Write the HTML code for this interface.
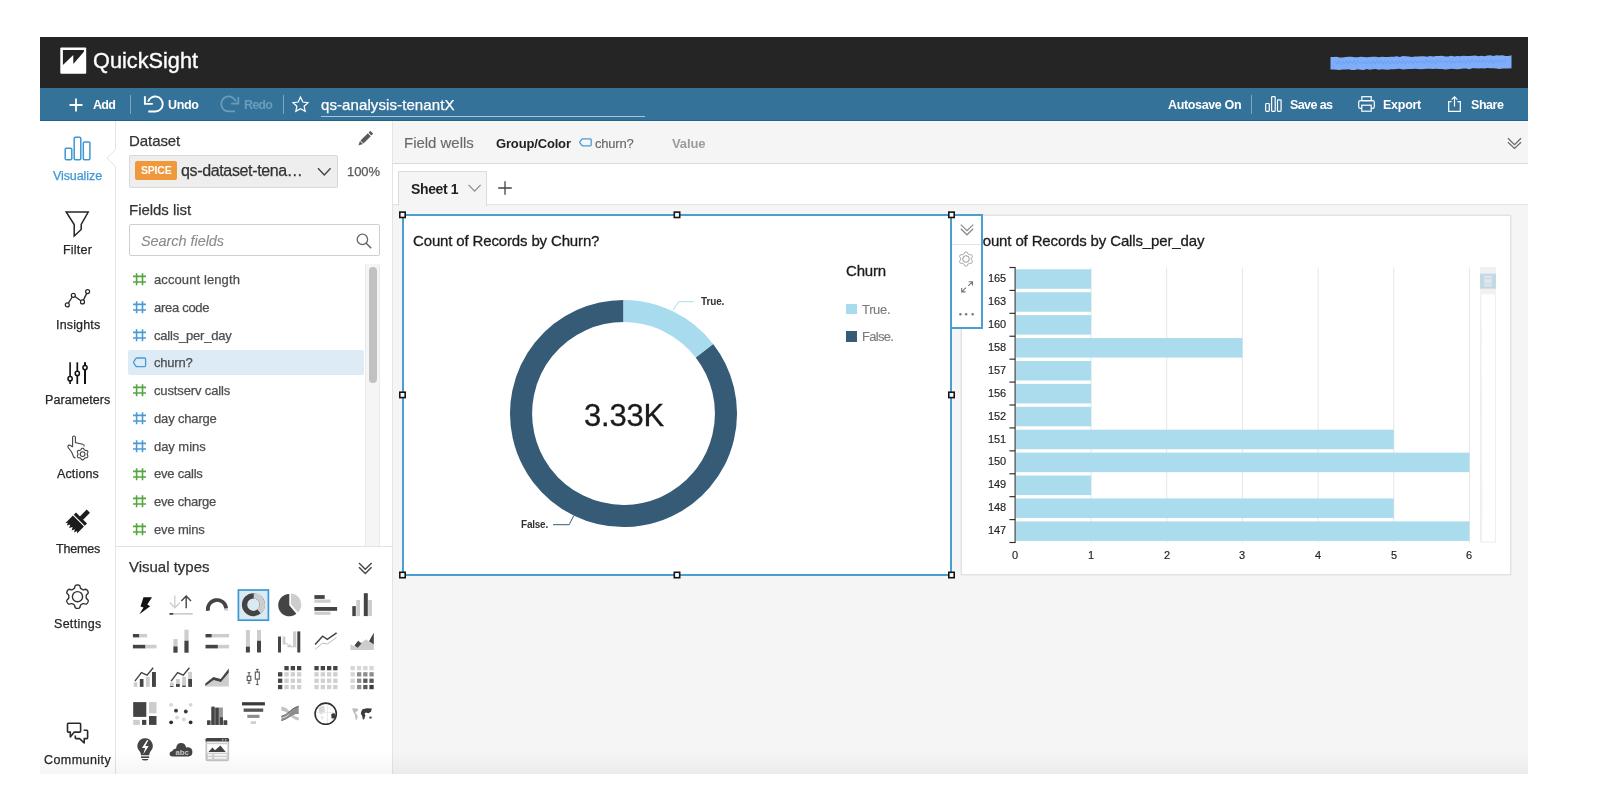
<!DOCTYPE html>
<html lang="en">
<head>
<meta charset="utf-8">
<title>QuickSight</title>
<style>
*{box-sizing:border-box;margin:0;padding:0}
html,body{width:1600px;height:796px;background:#fff;overflow:hidden}
body{font-family:"Liberation Sans",sans-serif;color:#333;position:relative}
.a{position:absolute;display:block}
.t{position:absolute;white-space:pre;line-height:1;will-change:transform}
svg{overflow:visible}
</style>
</head>
<body>
<div class="a" style="left:40px;top:37px;width:1488px;height:737px;background:#f5f5f5;"></div>
<div class="a" style="left:40px;top:37px;width:1488px;height:51px;background:#252525;"></div>
<div class="a" style="left:40px;top:88px;width:1488px;height:33.4px;background:#34729a;border-bottom:1.5px solid #1d6591;"></div>
<div class="a" style="left:40px;top:121px;width:76px;height:653px;background:#fff;"></div>
<div class="a" style="left:116px;top:121px;width:276px;height:653px;background:#fff;"></div>
<div class="a" style="left:392px;top:121px;width:1px;height:653px;background:#e4e4e4;"></div>
<div class="a" style="left:393px;top:121px;width:1135px;height:43px;background:#f5f5f5;border-bottom:1px solid #d9d9d9;"></div>
<div class="a" style="left:393px;top:164px;width:1135px;height:41px;background:#fff;border-bottom:1px solid #e3e3e3;"></div>
<svg class="a" style="left:100px;top:121px;" width="20" height="653" viewBox="0 0 20 653"><polyline points="15.5,0 15.5,28.5 7,37 15.5,45.5 15.5,653" fill="none" stroke="#e3e3e3" stroke-width="1"/></svg>
<svg class="a" style="left:60px;top:47px;" width="27" height="27" viewBox="0 0 27 27"><rect x="0.3" y="0.4" width="25.9" height="26.3" rx="1" fill="#fff"/><polygon points="2.9,3 23.9,3 23.9,4.8 13.3,16.9 13.3,8.1 2.9,18.1" fill="#222"/></svg>
<div class="t" style="left:93.40px;top:50.00px;font-size:21.7px;color:#fff;letter-spacing:0.013px;-webkit-text-stroke:0.35px #fff;">QuickSight</div>
<svg class="a" style="left:1326px;top:50px" width="190" height="26" viewBox="1326 50 190 26"><polygon points="1330.5,56.9 1333.5,57.1 1336.5,56.7 1339.5,57.5 1342.6,57.4 1345.6,57.1 1348.6,56.7 1351.6,56.7 1354.6,57.3 1357.7,57.3 1360.7,56.7 1363.7,57.1 1366.7,57.3 1369.7,57.0 1372.7,56.8 1375.8,56.8 1378.8,57.2 1381.8,56.8 1384.8,57.1 1387.8,57.1 1390.8,56.7 1393.8,56.7 1396.9,56.3 1399.9,56.9 1402.9,56.1 1405.9,56.3 1408.9,56.5 1412.0,57.0 1415.0,56.4 1418.0,56.6 1421.0,56.3 1424.0,56.2 1427.0,56.8 1430.0,55.9 1433.1,56.6 1436.1,56.0 1439.1,55.9 1442.1,55.8 1445.1,56.6 1448.2,56.4 1451.2,55.7 1454.2,56.6 1457.2,56.0 1460.2,56.2 1463.2,55.8 1466.2,55.9 1469.3,55.9 1472.3,55.8 1475.3,55.5 1478.3,56.2 1481.3,55.7 1484.3,56.3 1487.4,55.5 1490.4,55.3 1493.4,55.9 1496.4,55.3 1499.4,55.5 1502.5,55.3 1505.5,55.9 1508.5,56.1 1511.5,55.3 1511.5,68.3 1508.5,68.4 1505.5,68.4 1502.5,68.5 1499.4,69.0 1496.4,68.5 1493.4,68.2 1490.4,68.2 1487.4,68.1 1484.3,68.5 1481.3,68.2 1478.3,68.5 1475.3,68.3 1472.3,68.2 1469.3,69.2 1466.2,68.4 1463.2,68.5 1460.2,69.1 1457.2,69.3 1454.2,69.1 1451.2,68.7 1448.2,69.3 1445.1,69.4 1442.1,69.1 1439.1,68.9 1436.1,68.8 1433.1,69.1 1430.0,68.8 1427.0,68.7 1424.0,69.1 1421.0,69.3 1418.0,68.9 1415.0,68.8 1412.0,68.9 1408.9,69.0 1405.9,69.3 1402.9,69.4 1399.9,68.8 1396.9,69.1 1393.8,69.2 1390.8,69.2 1387.8,69.7 1384.8,69.5 1381.8,69.2 1378.8,69.8 1375.8,69.0 1372.7,69.2 1369.7,69.7 1366.7,69.1 1363.7,69.9 1360.7,69.7 1357.7,69.3 1354.6,69.9 1351.6,70.1 1348.6,69.3 1345.6,69.5 1342.6,69.4 1339.5,70.0 1336.5,69.7 1333.5,69.4 1330.5,69.4" fill="#80adf9"/><polyline points="1335.0,60.4 1336.9,64.1 1338.8,60.7 1340.7,64.6 1342.6,61.3 1344.5,64.1 1346.4,60.3 1348.3,63.8 1350.2,60.6 1352.1,63.7 1354.0,60.5 1355.9,64.5 1357.8,60.4 1359.7,63.5 1361.6,61.3 1363.5,64.0 1365.4,61.3 1367.3,63.8 1369.2,61.2 1371.1,64.1 1373.0,61.0 1374.9,64.2 1376.8,60.7 1378.7,63.4 1380.6,60.3 1382.5,64.3 1384.4,61.1 1386.3,64.3 1388.2,60.4 1390.1,63.9 1392.0,60.9 1393.9,63.9 1395.8,60.9 1397.7,63.7 1399.6,60.7 1401.5,63.9 1403.4,60.2 1405.3,64.1 1407.2,61.0 1409.1,63.1 1411.0,60.9 1412.9,64.1 1414.8,60.5 1416.7,63.0 1418.6,60.8 1420.5,63.1 1422.4,60.8 1424.3,63.7 1426.2,59.7 1428.1,63.0 1430.0,60.4 1431.9,63.5 1433.8,60.5 1435.7,63.9 1437.6,59.8 1439.5,62.7 1441.4,60.6 1443.3,62.7 1445.2,60.5 1447.1,62.8 1449.0,60.4 1450.9,63.6 1452.8,60.5 1454.7,63.3 1456.6,60.5 1458.5,62.8 1460.4,60.2 1462.3,63.0 1464.2,60.4 1466.1,63.5 1468.0,59.9 1469.9,63.1 1471.8,59.3 1473.7,62.5 1475.6,60.0 1477.5,63.0 1479.4,60.3 1481.3,63.1 1483.2,59.4 1485.1,62.8 1487.0,60.1 1488.9,63.0 1490.8,59.1 1492.7,63.3 1494.6,60.1 1496.5,62.4 1498.4,59.7 1500.3,62.7 1502.2,60.0 1504.1,62.6 1506.0,59.3" fill="none" stroke="#5d96f1" stroke-width="1" opacity=".55"/></svg>
<svg class="a" style="left:69px;top:97.5px;" width="14" height="14" viewBox="0 0 14 14"><path d="M7,0.5V13.5M0.5,7H13.5" stroke="#fff" stroke-width="1.8" fill="none"/></svg>
<div class="t" style="left:92.50px;top:99.00px;font-size:12.5px;color:#fff;font-weight:700;letter-spacing:-0.704px;">Add</div>
<div class="a" style="left:130px;top:95px;width:1px;height:19px;background:#7fa6c0;"></div>
<svg class="a" style="left:144px;top:94px;" width="21" height="20" viewBox="0 0 21 20"><path d="M4.1,7.6 A7.5,7.5 0 1 1 11.6,17.5 H4.3" fill="none" stroke="#fff" stroke-width="1.9"/><path d="M0.9,2.2V9.9H8.8" fill="none" stroke="#fff" stroke-width="1.9"/></svg>
<div class="t" style="left:168.40px;top:99.00px;font-size:12.5px;color:#fff;font-weight:700;letter-spacing:-0.334px;">Undo</div>
<svg class="a" style="left:219px;top:94px;" width="21" height="20" viewBox="0 0 21 20"><path d="M16.8,7.5 A7.5,7.5 0 1 0 9.3,17.4 H16.1" fill="none" stroke="#6a9dbc" stroke-width="1.8"/><path d="M19.3,2.9V9.7H12.2" fill="none" stroke="#6a9dbc" stroke-width="1.8"/></svg>
<div class="t" style="left:244.00px;top:99.00px;font-size:12.5px;color:#6a9dbc;font-weight:700;letter-spacing:-0.812px;">Redo</div>
<div class="a" style="left:283px;top:95px;width:1px;height:19px;background:#7fa6c0;"></div>
<svg class="a" style="left:292px;top:96px;" width="17" height="16" viewBox="0 0 17 16"><polygon points="8.5,1 10.8,6 16,6.6 12.1,10.2 13.2,15.4 8.5,12.8 3.8,15.4 4.9,10.2 1,6.6 6.2,6" fill="none" stroke="#fff" stroke-width="1.2" stroke-linejoin="miter"/></svg>
<div class="t" style="left:320.75px;top:97.00px;font-size:15px;color:#fff;letter-spacing:0.093px;-webkit-text-stroke:0.25px #fff;">qs-analysis-tenantX</div>
<div class="a" style="left:320.5px;top:116px;width:324px;height:1px;background:#a9c5d8;"></div>
<div class="t" style="left:1167.80px;top:99.00px;font-size:12.5px;color:#fff;font-weight:700;letter-spacing:-0.355px;">Autosave On</div>
<div class="a" style="left:1251px;top:95px;width:1px;height:19px;background:#7fa6c0;"></div>
<svg class="a" style="left:1265px;top:96px;" width="17" height="16" viewBox="0 0 17 16"><rect x="0.7" y="7.5" width="3.6" height="7.8" rx="0.8" fill="none" stroke="#fff" stroke-width="1.2"/><rect x="6.6" y="0.7" width="3.6" height="14.6" rx="0.8" fill="none" stroke="#fff" stroke-width="1.2"/><rect x="12.5" y="3.8" width="3.6" height="11.5" rx="0.8" fill="none" stroke="#fff" stroke-width="1.2"/></svg>
<div class="t" style="left:1290.00px;top:99.00px;font-size:12.5px;color:#fff;font-weight:700;letter-spacing:-0.597px;">Save as</div>
<svg class="a" style="left:1358px;top:95.5px;" width="17" height="16" viewBox="0 0 17 16"><rect x="3.8" y="0.7" width="9.4" height="4" fill="none" stroke="#fff" stroke-width="1.2"/><rect x="0.7" y="4.7" width="15.6" height="7.6" rx="1.6" fill="none" stroke="#fff" stroke-width="1.2"/><rect x="3.8" y="9.2" width="9.4" height="6" fill="#34729a" stroke="#fff" stroke-width="1.2"/></svg>
<div class="t" style="left:1382.80px;top:99.00px;font-size:12.5px;color:#fff;font-weight:700;letter-spacing:-0.266px;">Export</div>
<svg class="a" style="left:1448px;top:95.5px;" width="13" height="16" viewBox="0 0 13 16"><path d="M3.6,5.6H0.7V15.3H12.3V5.6H9.4" fill="none" stroke="#fff" stroke-width="1.2"/><path d="M6.5,10.5V1M3.6,3.6L6.5,0.9L9.4,3.6" fill="none" stroke="#fff" stroke-width="1.2"/></svg>
<div class="t" style="left:1470.70px;top:99.00px;font-size:12.5px;color:#fff;font-weight:700;letter-spacing:-0.450px;">Share</div>
<svg class="a" style="left:64px;top:136px;" width="27" height="25" viewBox="0 0 27 25"><rect x="1.2" y="12.3" width="6.6" height="11.5" rx="1.2" fill="none" stroke="#3d97d3" stroke-width="1.5"/><rect x="10.2" y="1.3" width="6.6" height="22.5" rx="1.2" fill="none" stroke="#3d97d3" stroke-width="1.5"/><rect x="19.3" y="5.9" width="6.6" height="17.9" rx="1.2" fill="none" stroke="#3d97d3" stroke-width="1.5"/></svg>
<div class="t" style="left:53.00px;top:170.00px;font-size:12.5px;color:#3d97d3;letter-spacing:-0.090px;-webkit-text-stroke:0.25px #3d97d3;">Visualize</div>
<svg class="a" style="left:64px;top:210px;" width="27" height="28" viewBox="0 0 27 28"><path d="M2.2,2 H24.2 L17.2,14.5 V19.5 L10.2,26 V14.5 Z" fill="none" stroke="#262626" stroke-width="1.5" stroke-linejoin="miter"/></svg>
<div class="t" style="left:63.00px;top:244.00px;font-size:12.5px;color:#262626;letter-spacing:0.203px;-webkit-text-stroke:0.25px #262626;">Filter</div>
<svg class="a" style="left:60px;top:285px;" width="32" height="26" viewBox="0 0 32 26"><line x1="8.36" y1="18.20" x2="12.24" y2="12.00" stroke="#262626" stroke-width="1.3"/><line x1="14.93" y1="11.47" x2="20.87" y2="15.73" stroke="#262626" stroke-width="1.3"/><line x1="23.39" y1="15.11" x2="26.71" y2="8.39" stroke="#262626" stroke-width="1.3"/><circle cx="7.30" cy="19.90" r="2" fill="none" stroke="#262626" stroke-width="1.2"/><circle cx="13.30" cy="10.30" r="2" fill="none" stroke="#262626" stroke-width="1.2"/><circle cx="22.50" cy="16.90" r="2" fill="none" stroke="#262626" stroke-width="1.2"/><circle cx="27.60" cy="6.60" r="2" fill="none" stroke="#262626" stroke-width="1.2"/></svg>
<div class="t" style="left:55.50px;top:319.00px;font-size:12.5px;color:#262626;letter-spacing:0.163px;-webkit-text-stroke:0.25px #262626;">Insights</div>
<svg class="a" style="left:60px;top:360px;" width="32" height="26" viewBox="0 0 32 26"><line x1="10.10" y1="2.3" x2="10.10" y2="24" stroke="#111" stroke-width="1.6"/><circle cx="10.10" cy="18.70" r="2.1" fill="#fff" stroke="#111" stroke-width="1.5"/><line x1="17.30" y1="2.3" x2="17.30" y2="24" stroke="#111" stroke-width="1.7"/><circle cx="17.30" cy="13.40" r="2.1" fill="#fff" stroke="#111" stroke-width="1.5"/><line x1="25.00" y1="2.3" x2="25.00" y2="24" stroke="#111" stroke-width="2.0"/><circle cx="25.00" cy="7.60" r="2.1" fill="#fff" stroke="#111" stroke-width="1.5"/></svg>
<div class="t" style="left:45.00px;top:394.00px;font-size:12.5px;color:#262626;letter-spacing:0.079px;-webkit-text-stroke:0.25px #262626;">Parameters</div>
<svg class="a" style="left:58px;top:428px;" width="36" height="36" viewBox="0 0 36 36"><path d="M14.6,19 V9.3 Q14.6,8 16,8 Q17.4,8 17.4,9.3 V14.5 L24.5,16.3 Q26.3,16.8 26.3,18.5" fill="none" stroke="#444" stroke-width="1.1"/><path d="M14.6,19 L12.2,17.3 Q10.6,16.6 9.9,18 Q9.6,19 10.6,20.2 L13.6,24 L15.5,28.5 Q16,30 17.6,30" fill="none" stroke="#444" stroke-width="1.1"/><path d="M24.60,20.30 L24.90,20.32 L25.20,20.39 L25.48,20.53 L25.73,20.76 L25.95,21.08 L26.13,21.40 L26.31,21.65 L26.50,21.84 L26.69,21.99 L26.90,22.12 L27.11,22.23 L27.34,22.33 L27.60,22.40 L27.91,22.43 L28.28,22.42 L28.65,22.45 L28.98,22.55 L29.24,22.73 L29.45,22.95 L29.62,23.20 L29.76,23.47 L29.84,23.77 L29.86,24.08 L29.79,24.41 L29.62,24.75 L29.44,25.07 L29.30,25.35 L29.24,25.61 L29.21,25.86 L29.20,26.10 L29.21,26.34 L29.24,26.59 L29.30,26.85 L29.44,27.13 L29.62,27.45 L29.79,27.79 L29.86,28.12 L29.84,28.43 L29.76,28.73 L29.62,29.00 L29.45,29.25 L29.24,29.47 L28.98,29.65 L28.65,29.75 L28.28,29.78 L27.91,29.77 L27.60,29.80 L27.34,29.87 L27.11,29.97 L26.90,30.08 L26.69,30.21 L26.50,30.36 L26.31,30.55 L26.13,30.80 L25.95,31.12 L25.73,31.44 L25.48,31.67 L25.20,31.81 L24.90,31.88 L24.60,31.90 L24.30,31.88 L24.00,31.81 L23.72,31.67 L23.47,31.44 L23.25,31.12 L23.07,30.80 L22.89,30.55 L22.70,30.36 L22.51,30.21 L22.30,30.08 L22.09,29.97 L21.86,29.87 L21.60,29.80 L21.29,29.77 L20.92,29.78 L20.55,29.75 L20.22,29.65 L19.96,29.47 L19.75,29.25 L19.58,29.00 L19.44,28.73 L19.36,28.43 L19.34,28.12 L19.41,27.79 L19.58,27.45 L19.76,27.13 L19.90,26.85 L19.96,26.59 L19.99,26.34 L20.00,26.10 L19.99,25.86 L19.96,25.61 L19.90,25.35 L19.76,25.07 L19.58,24.75 L19.41,24.41 L19.34,24.08 L19.36,23.77 L19.44,23.47 L19.58,23.20 L19.75,22.95 L19.96,22.73 L20.22,22.55 L20.55,22.45 L20.92,22.42 L21.29,22.43 L21.60,22.40 L21.86,22.33 L22.09,22.23 L22.30,22.12 L22.51,21.99 L22.70,21.84 L22.89,21.65 L23.07,21.40 L23.25,21.08 L23.47,20.76 L23.72,20.53 L24.00,20.39 L24.30,20.32Z" fill="none" stroke="#444" stroke-width="1.1"/><circle cx="24.6" cy="26.1" r="2.4" fill="none" stroke="#444" stroke-width="1.1"/></svg>
<div class="t" style="left:56.70px;top:468.00px;font-size:12.5px;color:#262626;letter-spacing:0.143px;-webkit-text-stroke:0.25px #262626;">Actions</div>
<svg class="a" style="left:0px;top:0px;" width="1" height="1" viewBox="0 0 1 1"><g transform="translate(80.4,519.1) rotate(45)" fill="#1c1c1c"><rect x="-2.3" y="-11.2" width="4.6" height="10"/><rect x="-7.8" y="-1.6" width="15.6" height="3.2"/><polygon points="-7.8,2.8 7.8,2.8 7.8,12.5 6.2,10.8 5,14 3.2,11 1.8,14.2 0,11 -1.6,14.2 -3.4,11 -5,14 -6.4,11.4 -7.8,13.6"/></g></svg>
<div class="t" style="left:55.70px;top:543.00px;font-size:12.5px;color:#262626;letter-spacing:-0.159px;-webkit-text-stroke:0.25px #262626;">Themes</div>
<svg class="a" style="left:58px;top:577px;" width="40" height="40" viewBox="0 0 40 40"><path d="M19.50,8.00 L20.11,8.02 L20.72,8.11 L21.30,8.32 L21.81,8.83 L22.14,9.85 L22.37,10.86 L22.68,11.41 L23.06,11.71 L23.45,11.94 L23.85,12.17 L24.24,12.40 L24.64,12.62 L25.09,12.80 L25.72,12.80 L26.71,12.49 L27.76,12.27 L28.45,12.45 L28.93,12.85 L29.31,13.33 L29.63,13.85 L29.92,14.39 L30.14,14.96 L30.26,15.57 L30.07,16.27 L29.35,17.06 L28.59,17.77 L28.27,18.31 L28.20,18.79 L28.20,19.24 L28.20,19.70 L28.20,20.16 L28.20,20.61 L28.27,21.09 L28.59,21.63 L29.35,22.34 L30.07,23.13 L30.26,23.83 L30.14,24.44 L29.92,25.01 L29.63,25.55 L29.31,26.07 L28.93,26.55 L28.45,26.95 L27.76,27.13 L26.71,26.91 L25.72,26.60 L25.09,26.60 L24.64,26.78 L24.24,27.00 L23.85,27.23 L23.45,27.46 L23.06,27.69 L22.68,27.99 L22.37,28.54 L22.14,29.55 L21.81,30.57 L21.30,31.08 L20.72,31.29 L20.11,31.38 L19.50,31.40 L18.89,31.38 L18.28,31.29 L17.70,31.08 L17.19,30.57 L16.86,29.55 L16.63,28.54 L16.32,27.99 L15.94,27.69 L15.55,27.46 L15.15,27.23 L14.76,27.00 L14.36,26.78 L13.91,26.60 L13.28,26.60 L12.29,26.91 L11.24,27.13 L10.55,26.95 L10.07,26.55 L9.69,26.07 L9.37,25.55 L9.08,25.01 L8.86,24.44 L8.74,23.83 L8.93,23.13 L9.65,22.34 L10.41,21.63 L10.73,21.09 L10.80,20.61 L10.80,20.16 L10.80,19.70 L10.80,19.24 L10.80,18.79 L10.73,18.31 L10.41,17.77 L9.65,17.06 L8.93,16.27 L8.74,15.57 L8.86,14.96 L9.08,14.39 L9.37,13.85 L9.69,13.33 L10.07,12.85 L10.55,12.45 L11.24,12.27 L12.29,12.49 L13.28,12.80 L13.91,12.80 L14.36,12.62 L14.76,12.40 L15.15,12.17 L15.55,11.94 L15.94,11.71 L16.32,11.41 L16.63,10.86 L16.86,9.85 L17.19,8.83 L17.70,8.32 L18.28,8.11 L18.89,8.02Z" fill="none" stroke="#333" stroke-width="1.4" stroke-linejoin="round"/><circle cx="19.5" cy="19.7" r="5.1" fill="none" stroke="#333" stroke-width="1.4"/></svg>
<div class="t" style="left:53.70px;top:618.00px;font-size:12.5px;color:#262626;letter-spacing:0.291px;-webkit-text-stroke:0.25px #262626;">Settings</div>
<svg class="a" style="left:58px;top:713px;" width="40" height="40" viewBox="0 0 40 40"><path d="M10.3,10.3 H21.8 Q22.6,10.3 22.6,11.1 V18.3 Q22.6,19.1 21.8,19.1 H16.3 L12.3,24 V19.1 H10.3 Q9.5,19.1 9.5,18.3 V11.1 Q9.5,10.3 10.3,10.3 Z" fill="none" stroke="#2a2a2a" stroke-width="1.6" stroke-linejoin="round"/><path d="M25.6,17.3 H28.8 Q29.6,17.3 29.6,18.1 V24.8 Q29.6,25.6 28.8,25.6 H26.2 V30 L21.6,25.6 H18.1 Q17.3,25.6 17.3,24.8 V22.4" fill="none" stroke="#2a2a2a" stroke-width="1.6" stroke-linejoin="round"/></svg>
<div class="t" style="left:44.00px;top:754.00px;font-size:12.5px;color:#262626;letter-spacing:0.442px;-webkit-text-stroke:0.25px #262626;">Community</div>
<div class="t" style="left:129.20px;top:133.00px;font-size:15px;color:#333;letter-spacing:-0.072px;-webkit-text-stroke:0.25px #333;">Dataset</div>
<svg class="a" style="left:356.2px;top:129.6px;" width="18" height="18" viewBox="0 0 18 18"><g transform="translate(9,9) rotate(45)" fill="#5a5a5a"><rect x="-2.1" y="-9.6" width="4.2" height="2.6" rx="0.6"/><rect x="-2.1" y="-6.1" width="4.2" height="10.4"/><polygon points="-2.1,5.1 2.1,5.1 0,9.2"/></g></svg>
<div class="a" style="left:129px;top:154.5px;width:208.5px;height:33.5px;background:#eee;border:1px solid #d8d8d8;border-radius:2px;"></div>
<div class="a" style="left:135.4px;top:161px;width:41.3px;height:18.7px;background:#f0983c;border-radius:2px;"></div>
<div class="t" style="left:141.00px;top:165.00px;font-size:10.5px;color:#fff;font-weight:700;letter-spacing:-0.203px;">SPICE</div>
<div class="t" style="left:181.00px;top:163.00px;font-size:16px;color:#333;letter-spacing:-0.355px;-webkit-text-stroke:0.25px #333;">qs-dataset-tena…</div>
<svg class="a" style="left:317px;top:167px;" width="15" height="10" viewBox="0 0 15 10"><polyline points="1,1.2 7.3,8 13.6,1.2" fill="none" stroke="#444" stroke-width="1.4"/></svg>
<div class="t" style="left:347.40px;top:165.00px;font-size:13px;color:#585858;letter-spacing:-0.062px;-webkit-text-stroke:0.25px #585858;">100%</div>
<div class="t" style="left:129.20px;top:202.00px;font-size:15px;color:#333;letter-spacing:-0.029px;-webkit-text-stroke:0.25px #333;">Fields list</div>
<div class="a" style="left:129px;top:224.2px;width:251px;height:31.5px;background:#fff;border:1px solid #cfcfcf;border-radius:2px;"></div>
<div class="t" style="left:140.50px;top:234.00px;font-size:14.5px;color:#8a8a8a;font-style:italic;letter-spacing:-0.064px;-webkit-text-stroke:0.1px #8a8a8a;">Search fields</div>
<svg class="a" style="left:356px;top:233px;" width="17" height="17" viewBox="0 0 17 17"><circle cx="6.4" cy="6.4" r="5.2" fill="none" stroke="#666" stroke-width="1.3"/><line x1="10.2" y1="10.2" x2="15.2" y2="15.2" stroke="#666" stroke-width="1.5"/></svg>
<div class="a" style="left:128px;top:350.2px;width:236.3px;height:24.8px;background:#dcebf5;border-radius:2px;"></div>
<svg class="a" style="left:133px;top:273.4px;" width="13" height="13" viewBox="0 0 13 13"><path d="M3.6,0.2V12.2M9.5,0.2V12.2M0,3.4H13M0,9H13" fill="none" stroke="#55a63e" stroke-width="1.6"/></svg>
<div class="t" style="left:154.40px;top:273.00px;font-size:13px;color:#4e4e4e;letter-spacing:0.102px;-webkit-text-stroke:0.25px #4e4e4e;">account length</div>
<svg class="a" style="left:133px;top:301.1px;" width="13" height="13" viewBox="0 0 13 13"><path d="M3.6,0.2V12.2M9.5,0.2V12.2M0,3.4H13M0,9H13" fill="none" stroke="#4a9bd4" stroke-width="1.6"/></svg>
<div class="t" style="left:154.40px;top:301.00px;font-size:13px;color:#4e4e4e;letter-spacing:-0.292px;-webkit-text-stroke:0.25px #4e4e4e;">area code</div>
<svg class="a" style="left:133px;top:328.9px;" width="13" height="13" viewBox="0 0 13 13"><path d="M3.6,0.2V12.2M9.5,0.2V12.2M0,3.4H13M0,9H13" fill="none" stroke="#4a9bd4" stroke-width="1.6"/></svg>
<div class="t" style="left:154.40px;top:329.00px;font-size:13px;color:#4e4e4e;letter-spacing:-0.201px;-webkit-text-stroke:0.25px #4e4e4e;">calls_per_day</div>
<svg class="a" style="left:133px;top:357.3px;" width="14" height="11" viewBox="0 0 14 11"><path d="M4,1 H11.6 Q12.6,1 12.6,2 V8.6 Q12.6,9.6 11.6,9.6 H4 Q3.3,9.6 2.8,9 L0.9,6.2 Q0.5,5.3 0.9,4.4 L2.8,1.6 Q3.3,1 4,1 Z" fill="none" stroke="#4a9bd4" stroke-width="1.3"/></svg>
<div class="t" style="left:154.40px;top:356.00px;font-size:13px;color:#4e4e4e;letter-spacing:-0.225px;-webkit-text-stroke:0.25px #4e4e4e;">churn?</div>
<svg class="a" style="left:133px;top:384.4px;" width="13" height="13" viewBox="0 0 13 13"><path d="M3.6,0.2V12.2M9.5,0.2V12.2M0,3.4H13M0,9H13" fill="none" stroke="#55a63e" stroke-width="1.6"/></svg>
<div class="t" style="left:154.40px;top:384.00px;font-size:13px;color:#4e4e4e;letter-spacing:-0.138px;-webkit-text-stroke:0.25px #4e4e4e;">custserv calls</div>
<svg class="a" style="left:133px;top:412.1px;" width="13" height="13" viewBox="0 0 13 13"><path d="M3.6,0.2V12.2M9.5,0.2V12.2M0,3.4H13M0,9H13" fill="none" stroke="#4a9bd4" stroke-width="1.6"/></svg>
<div class="t" style="left:154.40px;top:412.00px;font-size:13px;color:#4e4e4e;letter-spacing:-0.163px;-webkit-text-stroke:0.25px #4e4e4e;">day charge</div>
<svg class="a" style="left:133px;top:439.9px;" width="13" height="13" viewBox="0 0 13 13"><path d="M3.6,0.2V12.2M9.5,0.2V12.2M0,3.4H13M0,9H13" fill="none" stroke="#4a9bd4" stroke-width="1.6"/></svg>
<div class="t" style="left:154.40px;top:440.00px;font-size:13px;color:#4e4e4e;letter-spacing:-0.054px;-webkit-text-stroke:0.25px #4e4e4e;">day mins</div>
<svg class="a" style="left:133px;top:467.6px;" width="13" height="13" viewBox="0 0 13 13"><path d="M3.6,0.2V12.2M9.5,0.2V12.2M0,3.4H13M0,9H13" fill="none" stroke="#55a63e" stroke-width="1.6"/></svg>
<div class="t" style="left:154.40px;top:467.00px;font-size:13px;color:#4e4e4e;letter-spacing:-0.220px;-webkit-text-stroke:0.25px #4e4e4e;">eve calls</div>
<svg class="a" style="left:133px;top:495.4px;" width="13" height="13" viewBox="0 0 13 13"><path d="M3.6,0.2V12.2M9.5,0.2V12.2M0,3.4H13M0,9H13" fill="none" stroke="#55a63e" stroke-width="1.6"/></svg>
<div class="t" style="left:154.40px;top:495.00px;font-size:13px;color:#4e4e4e;letter-spacing:-0.233px;-webkit-text-stroke:0.25px #4e4e4e;">eve charge</div>
<svg class="a" style="left:133px;top:523.1px;" width="13" height="13" viewBox="0 0 13 13"><path d="M3.6,0.2V12.2M9.5,0.2V12.2M0,3.4H13M0,9H13" fill="none" stroke="#55a63e" stroke-width="1.6"/></svg>
<div class="t" style="left:154.40px;top:523.00px;font-size:13px;color:#4e4e4e;letter-spacing:-0.166px;-webkit-text-stroke:0.25px #4e4e4e;">eve mins</div>
<div class="a" style="left:364.5px;top:264px;width:15.3px;height:282px;background:#f5f5f5;border-left:1px solid #ebebeb;border-right:1px solid #ebebeb;"></div>
<div class="a" style="left:368.5px;top:266.7px;width:8.6px;height:116.5px;background:#c1c1c1;border-radius:4.3px;"></div>
<div class="a" style="left:116px;top:546px;width:276px;height:1px;background:#e2e2e2;"></div>
<div class="t" style="left:128.80px;top:559.00px;font-size:15px;color:#333;letter-spacing:-0.009px;-webkit-text-stroke:0.25px #333;">Visual types</div>
<svg class="a" style="left:358px;top:562px;" width="15" height="13" viewBox="0 0 15 13"><polyline points="1,1 7.3,7.2 13.6,1" fill="none" stroke="#444" stroke-width="1.4"/><polyline points="1,5.2 7.3,11.4 13.6,5.2" fill="none" stroke="#444" stroke-width="1.4"/></svg>
<svg class="a" style="left:126px;top:585px" width="262" height="185" viewBox="126 585 262 185"><polygon points="143.5,597.2 152,597.2 147.3,604.4 150.2,606.3 139.4,614.3 143.5,607.4 140.5,606.5" fill="#111"/><path d="M174.8,595.6V607.8M169.9,602.5L174.8,607.8L180.1,602.5" fill="none" stroke="#cdcdcd" stroke-width="1.3"/><path d="M186.2,608.2V596M181.3,600.9L186.2,596L191,600.9" fill="none" stroke="#444" stroke-width="1.4"/><rect x="169.5" y="613.0" width="23.2" height="1.7" fill="#cdcdcd"/><rect x="169.5" y="613.0" width="3.7" height="1.7" fill="#444"/><path d="M207.94,610.80 A9.2,9.2 0 1 1 226.06,610.80" fill="none" stroke="#cdcdcd" stroke-width="3.6"/><path d="M207.94,610.80 A9.2,9.2 0 1 1 226.15,608.24" fill="none" stroke="#444" stroke-width="3.6"/><rect x="238.4" y="590" width="30" height="30.2" fill="#d9eaf5" stroke="#3d97d3" stroke-width="1.7"/><circle cx="253.4" cy="604.7" r="8.85" fill="none" stroke="#444" stroke-width="5.3"/><path d="M253.71,595.86 A8.85,8.85 0 0 1 259.09,611.48" fill="none" stroke="#cdcdcd" stroke-width="5.3"/><path d="M289.3,605.2 L289.3,594.1 A11.1,11.1 0 1 0 296.4,613.7 Z" fill="#444"/><path d="M290.9,604.2 L290.9,593.6 A11,11 0 0 1 297.9,612.4 Z" fill="#cdcdcd"/><rect x="314.4" y="595.1" width="10.3" height="3.8" fill="#444"/><rect x="314.4" y="599.5" width="16.1" height="3.3" fill="#cdcdcd"/><rect x="314.4" y="607.0" width="22.7" height="3.8" fill="#444"/><rect x="314.4" y="611.7" width="16.1" height="3.1" fill="#cdcdcd"/><rect x="352.3" y="606.1" width="3.5" height="10.0" fill="#444"/><rect x="356.3" y="600.0" width="3.7" height="16.1" fill="#cdcdcd"/><rect x="363.8" y="593.2" width="4.0" height="22.9" fill="#444"/><rect x="368.2" y="600.0" width="3.8" height="16.1" fill="#cdcdcd"/><rect x="132.9" y="634.0" width="6.5" height="3.4" fill="#444"/><rect x="139.4" y="634.0" width="7.7" height="3.4" fill="#cdcdcd"/><rect x="132.9" y="644.8" width="12.6" height="3.6" fill="#444"/><rect x="145.5" y="644.8" width="11.0" height="3.6" fill="#cdcdcd"/><rect x="173.4" y="639.1" width="4.2" height="7.3" fill="#cdcdcd"/><rect x="173.4" y="646.4" width="4.2" height="6.3" fill="#444"/><rect x="184.4" y="629.7" width="4.2" height="11.0" fill="#cdcdcd"/><rect x="184.4" y="640.7" width="4.2" height="12.0" fill="#444"/><rect x="205.5" y="634.0" width="6.3" height="3.4" fill="#444"/><rect x="211.8" y="634.0" width="17.3" height="3.4" fill="#cdcdcd"/><rect x="205.5" y="644.8" width="12.4" height="3.6" fill="#444"/><rect x="217.9" y="644.8" width="11.2" height="3.6" fill="#cdcdcd"/><rect x="245.9" y="630.0" width="4.0" height="16.6" fill="#cdcdcd"/><rect x="245.9" y="646.6" width="4.0" height="5.9" fill="#444"/><rect x="257.0" y="630.0" width="4.0" height="10.7" fill="#cdcdcd"/><rect x="257.0" y="640.7" width="4.0" height="11.8" fill="#444"/><rect x="278.0" y="636.5" width="3.0" height="16.0" fill="#444"/><rect x="282.7" y="636.5" width="2.7" height="8.0" fill="#cdcdcd"/><rect x="285.4" y="643.0" width="2.0" height="1.5" fill="#cdcdcd"/><rect x="287.4" y="644.5" width="3.3" height="2.8" fill="#cdcdcd"/><rect x="290.7" y="646.0" width="2.3" height="1.3" fill="#cdcdcd"/><rect x="293.0" y="631.4" width="3.3" height="15.9" fill="#cdcdcd"/><rect x="297.3" y="631.4" width="3.0" height="21.1" fill="#444"/><polyline points="315.1,649.4 322.6,643.1 327.3,644 336.6,637.5" fill="none" stroke="#bbb" stroke-width="1"/><polyline points="315.1,644.5 322.6,636.2 327.3,639.3 336.6,632.8" fill="none" stroke="#444" stroke-width="1.5"/><polygon points="350.4,644.3 355,646.8 366.2,639.3 370,642.2 373.8,644.5 373.8,650 350.4,650" fill="#cdcdcd"/><polygon points="354.4,645.4 358.2,640.7 361.5,643.6 357.7,647.8" fill="#444"/><polygon points="369,641.2 373.8,632.8 373.8,644.5" fill="#444"/><rect x="133.7" y="682.4" width="3.7" height="4.5" fill="#cdcdcd"/><rect x="139.8" y="679.0" width="3.7" height="7.9" fill="#444"/><rect x="145.9" y="676.7" width="3.8" height="10.2" fill="#cdcdcd"/><rect x="152.0" y="672.0" width="3.9" height="14.9" fill="#444"/><polyline points="134.9,681.2 141.4,672.6 147.1,675.2 153.2,667.8" fill="none" stroke="#444" stroke-width="1.4"/><rect x="169.9" y="682.4" width="3.7" height="3.6" fill="#cdcdcd"/><rect x="169.9" y="686.0" width="3.7" height="0.9" fill="#444"/><rect x="176.0" y="679.0" width="3.8" height="5.0" fill="#cdcdcd"/><rect x="176.0" y="684.0" width="3.8" height="2.9" fill="#444"/><rect x="182.1" y="676.7" width="3.8" height="8.8" fill="#cdcdcd"/><rect x="182.1" y="685.5" width="3.8" height="1.4" fill="#444"/><rect x="188.2" y="672.0" width="3.8" height="7.0" fill="#cdcdcd"/><rect x="188.2" y="679.0" width="3.8" height="7.9" fill="#444"/><polyline points="171.1,681.2 177.6,672.6 183.3,675.2 189.4,667.8" fill="none" stroke="#444" stroke-width="1.4"/><polygon points="205.3,686.5 205.3,684.4 213.4,678.3 220.7,680.4 228.8,670.2 228.8,686.5" fill="#cdcdcd"/><polygon points="205.3,686 205.3,683.6 213.4,677 220.7,679 228.8,668.5 228.8,672.6 220.9,681.9 213.6,680 " fill="#444"/><path d="M249,672.5V676.3M249,680.5V683.3M247.6,672.7H250.4M247.6,683.2H250.4M257.3,669.2V672.1M257.3,679.1V684.7M255.9,669.4H258.7M255.9,684.6H258.7" fill="none" stroke="#555" stroke-width="1"/><rect x="247.2" y="676.3" width="3.6" height="4.2" fill="none" stroke="#555" stroke-width="1.1"/><rect x="255.3" y="672.1" width="4" height="7" fill="none" stroke="#555" stroke-width="1.1"/><rect x="278.0" y="672.2" width="4.3" height="4.3" fill="#444"/><rect x="278.0" y="678.6" width="4.3" height="4.3" fill="#444"/><rect x="278.0" y="684.9" width="4.3" height="4.3" fill="#444"/><rect x="284.4" y="666.0" width="4.3" height="4.3" fill="#444"/><rect x="284.4" y="672.2" width="4.3" height="4.3" fill="#d0d0d0"/><rect x="284.4" y="678.6" width="4.3" height="4.3" fill="#d0d0d0"/><rect x="284.4" y="684.9" width="4.3" height="4.3" fill="#d0d0d0"/><rect x="290.7" y="666.0" width="4.3" height="4.3" fill="#444"/><rect x="290.7" y="672.2" width="4.3" height="4.3" fill="#d0d0d0"/><rect x="290.7" y="678.6" width="4.3" height="4.3" fill="#d0d0d0"/><rect x="290.7" y="684.9" width="4.3" height="4.3" fill="#d0d0d0"/><rect x="297.0" y="666.0" width="4.3" height="4.3" fill="#444"/><rect x="297.0" y="672.2" width="4.3" height="4.3" fill="#d0d0d0"/><rect x="297.0" y="678.6" width="4.3" height="4.3" fill="#d0d0d0"/><rect x="297.0" y="684.9" width="4.3" height="4.3" fill="#d0d0d0"/><rect x="314.4" y="666.0" width="4.3" height="4.3" fill="#444"/><rect x="314.4" y="672.2" width="4.3" height="4.3" fill="#d0d0d0"/><rect x="314.4" y="678.6" width="4.3" height="4.3" fill="#d0d0d0"/><rect x="314.4" y="684.9" width="4.3" height="4.3" fill="#d0d0d0"/><rect x="320.7" y="666.0" width="4.3" height="4.3" fill="#444"/><rect x="320.7" y="672.2" width="4.3" height="4.3" fill="#d0d0d0"/><rect x="320.7" y="678.6" width="4.3" height="4.3" fill="#d0d0d0"/><rect x="320.7" y="684.9" width="4.3" height="4.3" fill="#d0d0d0"/><rect x="327.0" y="666.0" width="4.3" height="4.3" fill="#444"/><rect x="327.0" y="672.2" width="4.3" height="4.3" fill="#d0d0d0"/><rect x="327.0" y="678.6" width="4.3" height="4.3" fill="#d0d0d0"/><rect x="327.0" y="684.9" width="4.3" height="4.3" fill="#d0d0d0"/><rect x="333.2" y="666.0" width="4.3" height="4.3" fill="#444"/><rect x="333.2" y="672.2" width="4.3" height="4.3" fill="#d0d0d0"/><rect x="333.2" y="678.6" width="4.3" height="4.3" fill="#d0d0d0"/><rect x="333.2" y="684.9" width="4.3" height="4.3" fill="#d0d0d0"/><rect x="350.5" y="666.0" width="4.3" height="4.3" fill="#d6d6d6"/><rect x="350.5" y="672.2" width="4.3" height="4.3" fill="#d6d6d6"/><rect x="350.5" y="678.6" width="4.3" height="4.3" fill="#d6d6d6"/><rect x="350.5" y="684.9" width="4.3" height="4.3" fill="#d6d6d6"/><rect x="357.0" y="666.0" width="4.3" height="4.3" fill="#d6d6d6"/><rect x="357.0" y="672.2" width="4.3" height="4.3" fill="#8c8c8c"/><rect x="357.0" y="678.6" width="4.3" height="4.3" fill="#8c8c8c"/><rect x="357.0" y="684.9" width="4.3" height="4.3" fill="#8c8c8c"/><rect x="363.2" y="666.0" width="4.3" height="4.3" fill="#d6d6d6"/><rect x="363.2" y="672.2" width="4.3" height="4.3" fill="#8c8c8c"/><rect x="363.2" y="678.6" width="4.3" height="4.3" fill="#595959"/><rect x="363.2" y="684.9" width="4.3" height="4.3" fill="#595959"/><rect x="369.4" y="666.0" width="4.3" height="4.3" fill="#d6d6d6"/><rect x="369.4" y="672.2" width="4.3" height="4.3" fill="#8c8c8c"/><rect x="369.4" y="678.6" width="4.3" height="4.3" fill="#595959"/><rect x="369.4" y="684.9" width="4.3" height="4.3" fill="#3c3c3c"/><rect x="133.2" y="702.1" width="13.1" height="14.8" fill="#444"/><rect x="149.0" y="702.1" width="7.5" height="11.2" fill="#cdcdcd"/><rect x="149.0" y="716.0" width="7.5" height="8.9" fill="#444"/><rect x="133.2" y="719.9" width="6.6" height="5.0" fill="#cdcdcd"/><rect x="142.0" y="719.9" width="4.3" height="5.0" fill="#444"/><circle cx="171.1" cy="704.8" r="1.9" fill="#d6d6d6"/><circle cx="190.6" cy="704.8" r="1.9" fill="#d6d6d6"/><circle cx="176" cy="710.7" r="1.9" fill="#3a3a3a"/><circle cx="185.8" cy="711.5" r="1.9" fill="#3a3a3a"/><circle cx="177.1" cy="717.6" r="1.9" fill="#d6d6d6"/><circle cx="183.9" cy="719.4" r="1.9" fill="#d6d6d6"/><circle cx="171.1" cy="722.3" r="1.9" fill="#2e2e2e"/><circle cx="190.6" cy="722.3" r="1.9" fill="#2e2e2e"/><rect x="207.1" y="720.4" width="20.1" height="4.5" fill="#999"/><rect x="211.4" y="707.5" width="11.5" height="17.4" fill="#999"/><rect x="207.1" y="720.4" width="3.0" height="4.5" fill="#444"/><rect x="211.4" y="706.6" width="3.2" height="18.3" fill="#444"/><rect x="215.4" y="707.8" width="3.3" height="17.1" fill="#444"/><rect x="219.9" y="717.2" width="3.0" height="7.7" fill="#444"/><rect x="224.0" y="720.4" width="3.2" height="4.5" fill="#444"/><rect x="242.0" y="702.2" width="22.9" height="3.2" fill="#3a3a3a"/><rect x="243.6" y="708.5" width="19.6" height="3.3" fill="#555"/><rect x="247.3" y="714.8" width="12.2" height="3.1" fill="#8c8c8c"/><rect x="250.7" y="721.2" width="5.3" height="2.8" fill="#d0d0d0"/><path d="M281.3,706.6 C290,707.5 290,716 298.7,717.5 V720.5 C290,719.5 289,710.5 281.3,710.8 Z" fill="#c4c4c4"/><path d="M281.3,716.2 C289,715.5 291,707 298.7,706.3 V713.6 C292,713 289,719.5 281.3,721 V718.6 C288,717.5 290,713 292,711 C289,714.5 286,717.3 281.3,718 Z" fill="#8e8e8e"/><path d="M281.3,716.2 C288,715 291,708 298.7,706.3" fill="none" stroke="#555" stroke-width="0.8"/><path d="M281.3,720.6 C288,719 291,713.5 298.7,713.2" fill="none" stroke="#777" stroke-width="0.8"/><circle cx="325.7" cy="713.7" r="10.6" fill="#fff" stroke="#2e2e2e" stroke-width="1.6"/><path d="M318.5,708 Q321,705.2 324.3,706 L324.8,711.5 L321.5,714.5 L319,713 Z" fill="#d8d8d8"/><path d="M320.5,716.5 L323.5,716.5 L322.5,720.5 Z" fill="#e2e2e2"/><path d="M317,712.5H334.5M327.5,704V723" fill="none" stroke="#e6e6e6" stroke-width="0.8"/><path d="M331.2,714.6 Q332.5,712.8 335,713.6 L335.6,717 Q334,719.3 331.6,718.2 Z" fill="#3a3a3a"/><path d="M352,708.6 L356.5,708.2 L358.5,709.4 L357,711.2 L355.3,712.4 L356.6,714.2 L357.8,716.6 L356.6,719.8 L355.6,719.8 L355,715 L353.2,711.4 Z" fill="#bdbdbd"/><path d="M362.5,709.2 L367,708.2 L371.8,708.6 L371,711.8 L368.4,713.2 L366,712.6 L364.6,713.6 L365.4,715.6 L364.2,719.2 L362.8,719.4 L362.2,716 L360.8,713.8 L361.4,711.2 Z" fill="#3d3d3d"/><rect x="369.4" y="716.6" width="2.2" height="1.9" fill="#3d3d3d"/><path d="M145.1,738.2 A7.7,7.7 0 0 1 150.6,751.3 Q149.3,753 149.2,755.2 H141 Q140.9,753 139.6,751.3 A7.7,7.7 0 0 1 145.1,738.2 Z" fill="#444"/><polygon points="146.9,740.2 141.9,747.9 145.2,747.9 143.2,754.6 148.7,746.0 145.3,746.0 148.4,740.2" fill="#fff"/><rect x="141.0" y="756.4" width="8.2" height="1.6" fill="#444"/><path d="M141.6,758.9 H148.6 Q148,760.6 145.1,760.6 Q142.2,760.6 141.6,758.9 Z" fill="#444"/><path d="M172.5,756.4 Q169.6,756.4 169.6,753.8 Q169.6,751.6 172,751.2 Q173.5,748.6 176.1,748.4 Q176.6,743 181.2,743 Q185,743 186.2,747.4 Q192.4,746.8 192.4,752 Q192.4,756.4 188.4,756.4 Z" fill="#444"/><text x="175.6" y="754.8" font-family="Liberation Sans, sans-serif" font-size="7.6" font-weight="700" fill="#c8c8c8">abc</text><rect x="206.3" y="738.8" width="22" height="21.7" rx="1.2" fill="#fff" stroke="#c4c4c4" stroke-width="1.7"/><path d="M205.5,741.6 V739.6 Q205.5,738 207.1,738 H227.5 Q229.1,738 229.1,739.6 V741.6 Z" fill="#444"/><rect x="222" y="739.2" width="1.4" height="1.2" fill="#ccc"/><rect x="225" y="739.2" width="1.4" height="1.2" fill="#ccc"/><rect x="206.8" y="742.6" width="21.0" height="1.6" fill="#cfcfcf"/><rect x="206.8" y="752.6" width="21.0" height="7.4" fill="#cfcfcf"/><polygon points="208.4,752 212.4,747.4 215,750.2 220.4,745.6 225.8,752" fill="#444"/><rect x="208.0" y="754.2" width="4.2" height="1.4" fill="#fff"/><rect x="214.2" y="754.2" width="12.4" height="1.4" fill="#fff"/><rect x="208.0" y="757.2" width="4.2" height="1.4" fill="#fff"/><rect x="214.2" y="757.2" width="12.4" height="1.4" fill="#fff"/></svg>
<div class="t" style="left:404.25px;top:135.00px;font-size:15px;color:#6a6a6a;letter-spacing:-0.021px;-webkit-text-stroke:0.15px #6a6a6a;">Field wells</div>
<div class="t" style="left:496.00px;top:137.00px;font-size:13px;color:#222;font-weight:700;letter-spacing:-0.159px;">Group/Color</div>
<svg class="a" style="left:578.5px;top:137.5px;" width="14" height="10" viewBox="0 0 14 10"><path d="M3.8,0.8 H11.2 Q12.2,0.8 12.2,1.8 V6.8 Q12.2,7.8 11.2,7.8 H3.8 Q3.2,7.8 2.7,7.2 L0.9,5 Q0.5,4.3 0.9,3.6 L2.7,1.4 Q3.2,0.8 3.8,0.8 Z" fill="none" stroke="#4a9bd4" stroke-width="1.3"/></svg>
<div class="t" style="left:594.80px;top:137.00px;font-size:13px;color:#666;letter-spacing:-0.208px;-webkit-text-stroke:0.15px #666;">churn?</div>
<div class="t" style="left:672.00px;top:137.00px;font-size:13px;color:#9c9c9c;font-weight:700;letter-spacing:-0.134px;">Value</div>
<svg class="a" style="left:1507px;top:137px;" width="16" height="13" viewBox="0 0 16 13"><polyline points="1,1.3 7.5,7.6 14,1.3" fill="none" stroke="#666" stroke-width="1.2"/><polyline points="1,5.2 7.5,11.5 14,5.2" fill="none" stroke="#666" stroke-width="1.2"/></svg>
<div class="a" style="left:398px;top:170.5px;width:89px;height:35px;background:#f5f5f5;border:1px solid #dcdcdc;border-bottom:none;"></div>
<div class="t" style="left:410.50px;top:182.00px;font-size:14px;color:#222;font-weight:700;letter-spacing:-0.359px;">Sheet 1</div>
<svg class="a" style="left:468px;top:184px;" width="14" height="9" viewBox="0 0 14 9"><polyline points="0.6,0.8 6.6,7.2 12.6,0.8" fill="none" stroke="#8a8a8a" stroke-width="1.2"/></svg>
<svg class="a" style="left:498px;top:180.5px;" width="14" height="14" viewBox="0 0 14 14"><path d="M7,0.2V13.8M0.2,7H13.8" stroke="#444" stroke-width="1.3" fill="none"/></svg>
<div class="a" style="left:402.4px;top:214.7px;width:549px;height:360.4px;background:#fff;"></div>
<div class="t" style="left:412.50px;top:233.00px;font-size:15px;color:#1c1c1c;letter-spacing:-0.147px;-webkit-text-stroke:0.3px #1c1c1c;">Count of Records by Churn?</div>
<svg class="a" style="left:402px;top:214px" width="550" height="362" viewBox="402 214 550 362"><path d="M704.42,350.66 A102.45,102.45 0 1 1 623.50,311.05" fill="none" stroke="#355b76" stroke-width="22.1"/><path d="M623.50,311.05 A102.45,102.45 0 0 1 704.42,350.66" fill="none" stroke="#a9dbef" stroke-width="22.1"/><polyline points="673,310 678.7,301.7 693.7,301.7" fill="none" stroke="#a9dbef" stroke-width="1"/><polyline points="553,524.7 569.2,524.7 573.7,515.7" fill="none" stroke="#355b76" stroke-width="1"/></svg>
<div class="t" style="left:583.90px;top:400.00px;font-size:31px;color:#1a1a1a;letter-spacing:-0.203px;-webkit-text-stroke:0.3px #1a1a1a;">3.33K</div>
<div class="t" style="left:700.50px;top:297.00px;font-size:10px;color:#333;font-weight:700;letter-spacing:-0.141px;">True.</div>
<div class="t" style="left:520.50px;top:520.00px;font-size:10px;color:#333;font-weight:700;letter-spacing:-0.227px;">False.</div>
<div class="t" style="left:846.00px;top:263.00px;font-size:15px;color:#1c1c1c;letter-spacing:-0.172px;-webkit-text-stroke:0.3px #1c1c1c;">Churn</div>
<div class="a" style="left:845.6px;top:304.4px;width:11.2px;height:10.1px;background:#a9dbef;"></div>
<div class="a" style="left:845.6px;top:331.4px;width:11.2px;height:10.5px;background:#355b76;"></div>
<div class="t" style="left:862.40px;top:303.00px;font-size:13px;color:#7a7a7a;letter-spacing:-0.332px;-webkit-text-stroke:0.1px #7a7a7a;">True.</div>
<div class="t" style="left:862.40px;top:330.00px;font-size:13px;color:#7a7a7a;letter-spacing:-0.701px;-webkit-text-stroke:0.1px #7a7a7a;">False.</div>
<div class="a" style="left:961px;top:214.5px;width:550px;height:360.2px;background:#fff;border:1px solid #e2e2e2;box-shadow:0 0 1.5px rgba(0,0,0,.12);"></div>
<div class="t" style="left:972.00px;top:233.00px;font-size:15px;color:#1c1c1c;letter-spacing:-0.136px;-webkit-text-stroke:0.3px #1c1c1c;">Count of Records by Calls_per_day</div>
<svg class="a" style="left:961px;top:214px" width="552" height="362" viewBox="961 214 552 362"><line x1="1091.1" y1="267.5" x2="1091.1" y2="542.5" stroke="#e6e6e6" stroke-width="1"/><line x1="1166.7" y1="267.5" x2="1166.7" y2="542.5" stroke="#e6e6e6" stroke-width="1"/><line x1="1242.4" y1="267.5" x2="1242.4" y2="542.5" stroke="#e6e6e6" stroke-width="1"/><line x1="1318.1" y1="267.5" x2="1318.1" y2="542.5" stroke="#e6e6e6" stroke-width="1"/><line x1="1393.8" y1="267.5" x2="1393.8" y2="542.5" stroke="#e6e6e6" stroke-width="1"/><line x1="1469.4" y1="267.5" x2="1469.4" y2="542.5" stroke="#e6e6e6" stroke-width="1"/><rect x="1015.4" y="269.30" width="75.7" height="19.52" fill="#aadcee"/><rect x="1015.4" y="292.22" width="75.7" height="19.52" fill="#aadcee"/><rect x="1015.4" y="315.13" width="75.7" height="19.52" fill="#aadcee"/><rect x="1015.4" y="338.05" width="227.0" height="19.52" fill="#aadcee"/><rect x="1015.4" y="360.97" width="75.7" height="19.52" fill="#aadcee"/><rect x="1015.4" y="383.88" width="75.7" height="19.52" fill="#aadcee"/><rect x="1015.4" y="406.80" width="75.7" height="19.52" fill="#aadcee"/><rect x="1015.4" y="429.72" width="378.4" height="19.52" fill="#aadcee"/><rect x="1015.4" y="452.63" width="454.0" height="19.52" fill="#aadcee"/><rect x="1015.4" y="475.55" width="75.7" height="19.52" fill="#aadcee"/><rect x="1015.4" y="498.47" width="378.4" height="19.52" fill="#aadcee"/><rect x="1015.4" y="521.38" width="454.0" height="19.52" fill="#aadcee"/><line x1="1009.4" y1="267.50" x2="1015.4" y2="267.50" stroke="#333" stroke-width="1.2"/><line x1="1009.4" y1="290.42" x2="1015.4" y2="290.42" stroke="#333" stroke-width="1.2"/><line x1="1009.4" y1="313.33" x2="1015.4" y2="313.33" stroke="#333" stroke-width="1.2"/><line x1="1009.4" y1="336.25" x2="1015.4" y2="336.25" stroke="#333" stroke-width="1.2"/><line x1="1009.4" y1="359.17" x2="1015.4" y2="359.17" stroke="#333" stroke-width="1.2"/><line x1="1009.4" y1="382.08" x2="1015.4" y2="382.08" stroke="#333" stroke-width="1.2"/><line x1="1009.4" y1="405.00" x2="1015.4" y2="405.00" stroke="#333" stroke-width="1.2"/><line x1="1009.4" y1="427.92" x2="1015.4" y2="427.92" stroke="#333" stroke-width="1.2"/><line x1="1009.4" y1="450.83" x2="1015.4" y2="450.83" stroke="#333" stroke-width="1.2"/><line x1="1009.4" y1="473.75" x2="1015.4" y2="473.75" stroke="#333" stroke-width="1.2"/><line x1="1009.4" y1="496.67" x2="1015.4" y2="496.67" stroke="#333" stroke-width="1.2"/><line x1="1009.4" y1="519.58" x2="1015.4" y2="519.58" stroke="#333" stroke-width="1.2"/><line x1="1009.4" y1="542.50" x2="1015.4" y2="542.50" stroke="#333" stroke-width="1.2"/><line x1="1015.1" y1="267.0" x2="1015.1" y2="543.0" stroke="#444" stroke-width="1.2"/><rect x="1480.5" y="267.5" width="15" height="274.5" fill="#fff" stroke="#eeeeee" stroke-width="1"/><rect x="1480" y="267.5" width="16" height="27" fill="#f1f1f1"/><rect x="1480" y="273.6" width="16" height="15.1" fill="#c3d9e6"/><rect x="1484.3" y="275.8" width="7.4" height="10.6" fill="#dde8ef" stroke="#cfdde6" stroke-width="0.6"/><path d="M1486.3,278.5h1M1488.8,278.5h1M1486.3,283.7h1M1488.8,283.7h1" stroke="#aab8c2" stroke-width="1"/><path d="M1481,295 L1481.8,300 1481.3,310 1482,330 1481.6,360 1482.2,400 1481.8,450 1482.6,500 1482,541 1481,541 Z" fill="#f2f2f2"/></svg>
<div class="t" style="left:988.10px;top:273.00px;font-size:11px;color:#222;letter-spacing:-0.120px;-webkit-text-stroke:0.15px #222;">165</div>
<div class="t" style="left:988.10px;top:296.00px;font-size:11px;color:#222;letter-spacing:-0.120px;-webkit-text-stroke:0.15px #222;">163</div>
<div class="t" style="left:988.10px;top:319.00px;font-size:11px;color:#222;letter-spacing:-0.120px;-webkit-text-stroke:0.15px #222;">160</div>
<div class="t" style="left:988.10px;top:342.00px;font-size:11px;color:#222;letter-spacing:-0.120px;-webkit-text-stroke:0.15px #222;">158</div>
<div class="t" style="left:988.10px;top:365.00px;font-size:11px;color:#222;letter-spacing:-0.120px;-webkit-text-stroke:0.15px #222;">157</div>
<div class="t" style="left:988.10px;top:388.00px;font-size:11px;color:#222;letter-spacing:-0.120px;-webkit-text-stroke:0.15px #222;">156</div>
<div class="t" style="left:988.10px;top:411.00px;font-size:11px;color:#222;letter-spacing:-0.120px;-webkit-text-stroke:0.15px #222;">152</div>
<div class="t" style="left:988.10px;top:434.00px;font-size:11px;color:#222;letter-spacing:-0.120px;-webkit-text-stroke:0.15px #222;">151</div>
<div class="t" style="left:988.10px;top:456.00px;font-size:11px;color:#222;letter-spacing:-0.120px;-webkit-text-stroke:0.15px #222;">150</div>
<div class="t" style="left:988.10px;top:479.00px;font-size:11px;color:#222;letter-spacing:-0.120px;-webkit-text-stroke:0.15px #222;">149</div>
<div class="t" style="left:988.10px;top:502.00px;font-size:11px;color:#222;letter-spacing:-0.120px;-webkit-text-stroke:0.15px #222;">148</div>
<div class="t" style="left:988.10px;top:525.00px;font-size:11px;color:#222;letter-spacing:-0.120px;-webkit-text-stroke:0.15px #222;">147</div>
<div class="t" style="left:1012.34px;top:550.00px;font-size:11px;color:#222;-webkit-text-stroke:0.15px #222;">0</div>
<div class="t" style="left:1088.01px;top:550.00px;font-size:11px;color:#222;-webkit-text-stroke:0.15px #222;">1</div>
<div class="t" style="left:1163.68px;top:550.00px;font-size:11px;color:#222;-webkit-text-stroke:0.15px #222;">2</div>
<div class="t" style="left:1239.35px;top:550.00px;font-size:11px;color:#222;-webkit-text-stroke:0.15px #222;">3</div>
<div class="t" style="left:1315.02px;top:550.00px;font-size:11px;color:#222;-webkit-text-stroke:0.15px #222;">4</div>
<div class="t" style="left:1390.69px;top:550.00px;font-size:11px;color:#222;-webkit-text-stroke:0.15px #222;">5</div>
<div class="t" style="left:1466.36px;top:550.00px;font-size:11px;color:#222;-webkit-text-stroke:0.15px #222;">6</div>
<div class="a" style="left:401.7px;top:213.9px;width:550.6px;height:362.1px;border:2px solid #4b9ed4;"></div>
<div class="a" style="left:950.4px;top:213.9px;width:32.2px;height:115px;background:#fff;border:2px solid #4b9ed4;"></div>
<div class="a" style="left:952.4px;top:243.7px;width:28.2px;height:1px;background:#e3e3e3;"></div>
<svg class="a" style="left:959.5px;top:224px;" width="15" height="12" viewBox="0 0 15 12"><polyline points="0.8,0.6 7,6.6 13.2,0.6" fill="none" stroke="#8a8a8a" stroke-width="1.2"/><polyline points="0.8,4.8 7,10.8 13.2,4.8" fill="none" stroke="#8a8a8a" stroke-width="1.2"/></svg>
<svg class="a" style="left:958.1px;top:250.6px;" width="16" height="16" viewBox="0 0 16 16"><path d="M8.00,1.00 L8.37,1.01 L8.73,1.06 L9.08,1.18 L9.39,1.46 L9.60,2.01 L9.77,2.56 L9.97,2.87 L10.21,3.04 L10.45,3.18 L10.70,3.32 L10.94,3.47 L11.19,3.61 L11.46,3.73 L11.82,3.75 L12.38,3.62 L12.97,3.53 L13.37,3.65 L13.64,3.90 L13.87,4.19 L14.06,4.50 L14.23,4.82 L14.37,5.16 L14.45,5.53 L14.36,5.93 L13.99,6.40 L13.59,6.81 L13.43,7.14 L13.40,7.43 L13.40,7.72 L13.40,8.00 L13.40,8.28 L13.40,8.57 L13.43,8.86 L13.59,9.19 L13.99,9.60 L14.36,10.07 L14.45,10.47 L14.37,10.84 L14.23,11.18 L14.06,11.50 L13.87,11.81 L13.64,12.10 L13.37,12.35 L12.97,12.47 L12.38,12.38 L11.82,12.25 L11.46,12.27 L11.19,12.39 L10.94,12.53 L10.70,12.68 L10.45,12.82 L10.21,12.96 L9.97,13.13 L9.77,13.44 L9.60,13.99 L9.39,14.54 L9.08,14.82 L8.73,14.94 L8.37,14.99 L8.00,15.00 L7.63,14.99 L7.27,14.94 L6.92,14.82 L6.61,14.54 L6.40,13.99 L6.23,13.44 L6.03,13.13 L5.79,12.96 L5.55,12.82 L5.30,12.68 L5.06,12.53 L4.81,12.39 L4.54,12.27 L4.18,12.25 L3.62,12.38 L3.03,12.47 L2.63,12.35 L2.36,12.10 L2.13,11.81 L1.94,11.50 L1.77,11.18 L1.63,10.84 L1.55,10.47 L1.64,10.07 L2.01,9.60 L2.41,9.19 L2.57,8.86 L2.60,8.57 L2.60,8.28 L2.60,8.00 L2.60,7.72 L2.60,7.43 L2.57,7.14 L2.41,6.81 L2.01,6.40 L1.64,5.93 L1.55,5.53 L1.63,5.16 L1.77,4.82 L1.94,4.50 L2.13,4.19 L2.36,3.90 L2.63,3.65 L3.03,3.53 L3.62,3.62 L4.18,3.75 L4.54,3.73 L4.81,3.61 L5.06,3.47 L5.30,3.32 L5.55,3.18 L5.79,3.04 L6.03,2.87 L6.23,2.56 L6.40,2.01 L6.61,1.46 L6.92,1.18 L7.27,1.06 L7.63,1.01Z" fill="none" stroke="#9a9a9a" stroke-width="1" stroke-linejoin="round"/><circle cx="8" cy="8" r="3.3" fill="none" stroke="#9a9a9a" stroke-width="1"/></svg>
<svg class="a" style="left:961px;top:281px;" width="13" height="12" viewBox="0 0 13 12"><path d="M7.2,4.9 L11.4,0.8 M7.6,0.7 H11.5 V4.6 M4.9,6.7 L0.8,10.8 M0.7,7 V10.9 H4.6" fill="none" stroke="#777" stroke-width="1.1"/></svg>
<svg class="a" style="left:958px;top:312px;" width="17" height="5" viewBox="0 0 17 5"><circle cx="2.4" cy="2.2" r="1.2" fill="#777"/><circle cx="8.1" cy="2.2" r="1.2" fill="#777"/><circle cx="14.7" cy="2.2" r="1.2" fill="#777"/></svg>
<svg class="a" style="left:395px;top:208px" width="565" height="375" viewBox="395 208 565 375"><rect x="399.8" y="212.1" width="5.4" height="5.4" fill="#fff" stroke="#151515" stroke-width="1.6"/><rect x="674.3" y="212.1" width="5.4" height="5.4" fill="#fff" stroke="#151515" stroke-width="1.6"/><rect x="948.8" y="212.1" width="5.4" height="5.4" fill="#fff" stroke="#151515" stroke-width="1.6"/><rect x="399.8" y="392.2" width="5.4" height="5.4" fill="#fff" stroke="#151515" stroke-width="1.6"/><rect x="948.8" y="392.2" width="5.4" height="5.4" fill="#fff" stroke="#151515" stroke-width="1.6"/><rect x="399.8" y="572.3" width="5.4" height="5.4" fill="#fff" stroke="#151515" stroke-width="1.6"/><rect x="674.3" y="572.3" width="5.4" height="5.4" fill="#fff" stroke="#151515" stroke-width="1.6"/><rect x="948.8" y="572.3" width="5.4" height="5.4" fill="#fff" stroke="#151515" stroke-width="1.6"/></svg>
<div class="a" style="left:40px;top:752px;width:1488px;height:22px;background:linear-gradient(rgba(0,0,0,0),rgba(0,0,0,0.04));pointer-events:none;"></div>
</body>
</html>
